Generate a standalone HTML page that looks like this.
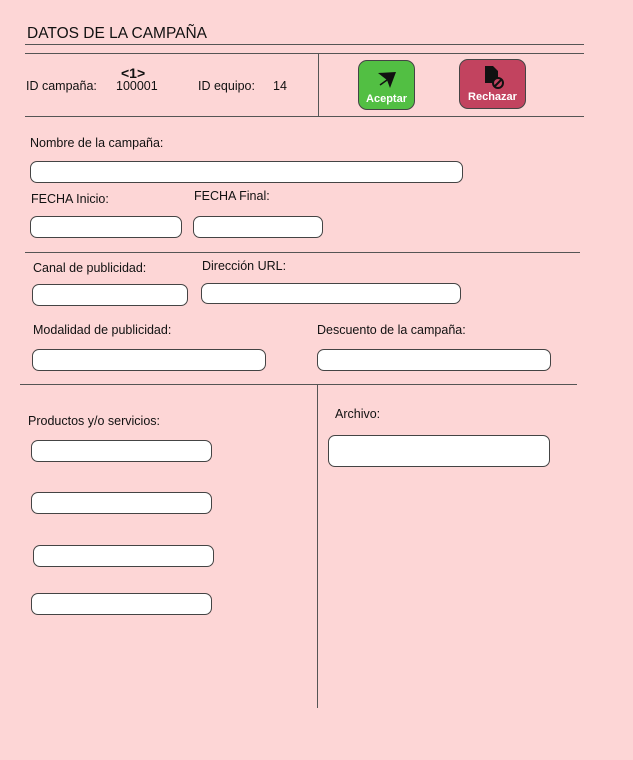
<!DOCTYPE html>
<html><head><meta charset="utf-8"><style>
*{margin:0;padding:0;box-sizing:border-box}
body{width:633px;height:760px;background:#fdd6d6;position:relative;overflow:hidden;font-family:"Liberation Sans",sans-serif;color:#111}
.t{position:absolute;font-size:12.5px;white-space:nowrap}
.h{position:absolute;height:1px;background:#555}
.v{position:absolute;width:1px;background:#555}
.in{position:absolute;background:#fff;border:1px solid #444;border-radius:7px}
.btn{position:absolute;border:1px solid #444;border-radius:9px;color:#fff;font-weight:bold;font-size:11px;text-align:center}
</style></head><body>
<div class="t" style="left:27px;top:25px;font-size:15.5px">DATOS DE LA CAMPAÑA</div>
<div class="h" style="left:25px;top:44px;width:559px"></div>
<div class="h" style="left:25px;top:53px;width:559px"></div>
<div class="v" style="left:318px;top:53px;height:63px"></div>
<div class="h" style="left:25px;top:116px;width:559px"></div>
<div class="t" style="left:26px;top:79px">ID campaña:</div>
<div class="t" style="left:121px;top:65px;font-size:14px;font-weight:bold">&lt;1&gt;</div>
<div class="t" style="left:116px;top:79px">100001</div>
<div class="t" style="left:198px;top:79px">ID equipo:</div>
<div class="t" style="left:273px;top:79px">14</div>
<div class="btn" style="left:358px;top:60px;width:57px;height:50px;background:#52bf43">
<svg width="22" height="20" viewBox="0 0 22 20" style="position:absolute;left:17px;top:9px"><path d="M2 3L20 2L14 18L11 10Z" fill="#111"/><path d="M11 10L4 15" stroke="#111" stroke-width="1.5"/></svg>
<div style="position:absolute;left:0;right:0;top:32px">Aceptar</div></div>
<div class="btn" style="left:459px;top:59px;width:67px;height:50px;background:#c2435f">
<svg width="24" height="24" viewBox="0 0 24 24" style="position:absolute;left:22px;top:5px"><path d="M3 1H11L16 6V18H3Z" fill="#111"/><circle cx="16" cy="18" r="5" fill="#c2435f" stroke="#111" stroke-width="2"/><path d="M13 21L19 15" stroke="#111" stroke-width="2"/></svg>
<div style="position:absolute;left:0;right:0;top:31px">Rechazar</div></div>
<div class="t" style="left:30px;top:136px">Nombre de la campaña:</div>
<div class="in" style="left:30px;top:161px;width:433px;height:22px"></div>
<div class="t" style="left:31px;top:192px">FECHA Inicio:</div>
<div class="t" style="left:194px;top:189px">FECHA Final:</div>
<div class="in" style="left:30px;top:216px;width:152px;height:22px"></div>
<div class="in" style="left:193px;top:216px;width:130px;height:22px"></div>
<div class="h" style="left:25px;top:252px;width:555px"></div>
<div class="t" style="left:33px;top:261px">Canal de publicidad:</div>
<div class="t" style="left:202px;top:259px">Dirección URL:</div>
<div class="in" style="left:32px;top:284px;width:156px;height:22px"></div>
<div class="in" style="left:201px;top:283px;width:260px;height:21px"></div>
<div class="t" style="left:33px;top:323px">Modalidad de publicidad:</div>
<div class="t" style="left:317px;top:323px">Descuento de la campaña:</div>
<div class="in" style="left:32px;top:349px;width:234px;height:22px"></div>
<div class="in" style="left:317px;top:349px;width:234px;height:22px"></div>
<div class="h" style="left:20px;top:384px;width:557px"></div>
<div class="v" style="left:317px;top:384px;height:324px"></div>
<div class="t" style="left:28px;top:414px">Productos y/o servicios:</div>
<div class="t" style="left:335px;top:407px">Archivo:</div>
<div class="in" style="left:328px;top:435px;width:222px;height:32px"></div>
<div class="in" style="left:31px;top:440px;width:181px;height:22px"></div>
<div class="in" style="left:31px;top:492px;width:181px;height:22px"></div>
<div class="in" style="left:33px;top:545px;width:181px;height:22px"></div>
<div class="in" style="left:31px;top:593px;width:181px;height:22px"></div>
</body></html>
